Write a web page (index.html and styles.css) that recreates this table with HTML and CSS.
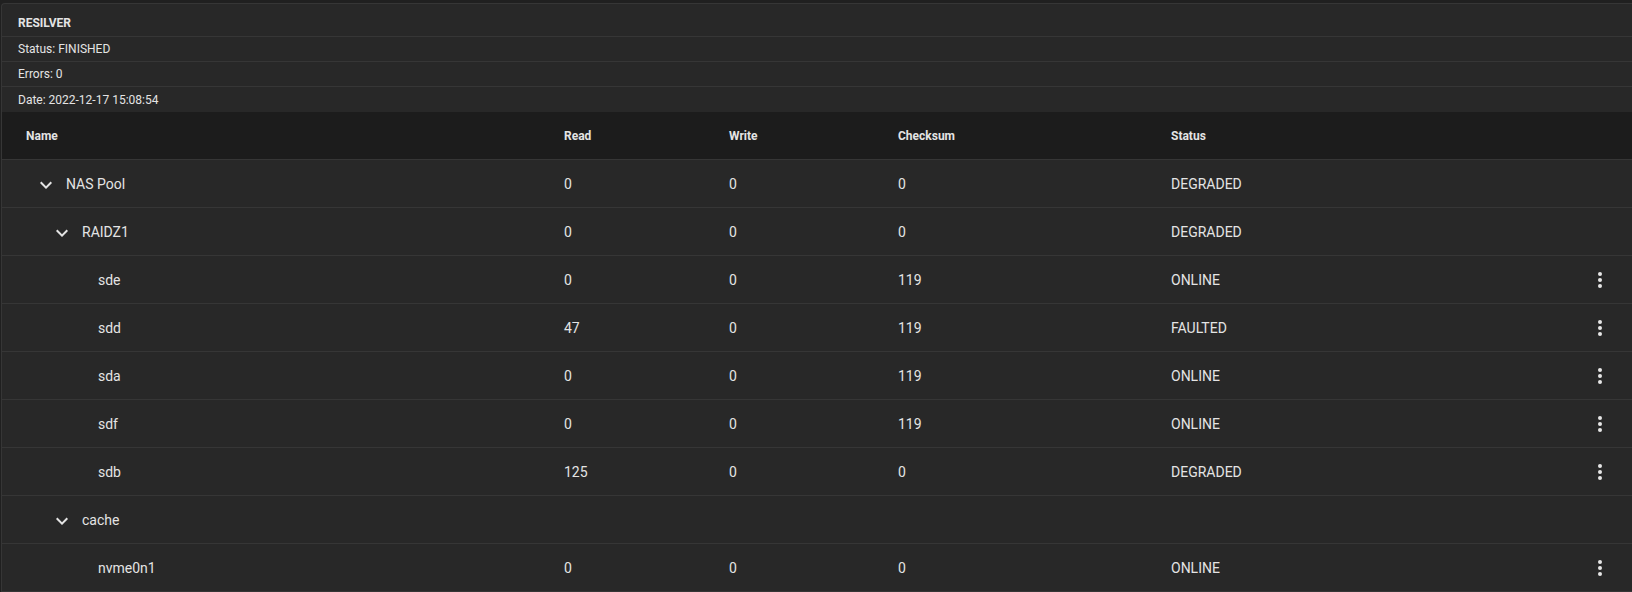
FILE: index.html
```html
<!DOCTYPE html>
<html>
<head>
<meta charset="utf-8">
<link rel="stylesheet" href="styles.css">
</head>
<body>
<div class="card">
  <div class="info">
    <div class="info-row info-title">RESILVER</div>
    <div class="info-row">Status: FINISHED</div>
    <div class="info-row">Errors: 0</div>
    <div class="info-row info-last">Date: 2022-12-17 15:08:54</div>
  </div>
  <div class="table">
    <div class="tr thead">
      <div class="td name">Name</div>
      <div class="td">Read</div>
      <div class="td">Write</div>
      <div class="td">Checksum</div>
      <div class="td">Status</div>
      <div class="td actions"></div>
    </div>

    <div class="tr">
      <div class="td name lvl0"><svg class="chev" viewBox="0 0 24 24"><path d="M16.59 8.59L12 13.17 7.41 8.59 6 10l6 6 6-6z"/></svg><span>NAS Pool</span></div>
      <div class="td">0</div><div class="td">0</div><div class="td">0</div><div class="td">DEGRADED</div><div class="td actions"></div>
    </div>
    <div class="tr">
      <div class="td name lvl1"><svg class="chev" viewBox="0 0 24 24"><path d="M16.59 8.59L12 13.17 7.41 8.59 6 10l6 6 6-6z"/></svg><span>RAIDZ1</span></div>
      <div class="td">0</div><div class="td">0</div><div class="td">0</div><div class="td">DEGRADED</div><div class="td actions"></div>
    </div>
    <div class="tr">
      <div class="td name lvl2"><span class="spacer"></span><span>sde</span></div>
      <div class="td">0</div><div class="td">0</div><div class="td">119</div><div class="td">ONLINE</div>
      <div class="td actions"><svg class="more" viewBox="0 0 24 24"><circle cx="12" cy="6" r="2"/><circle cx="12" cy="12" r="2"/><circle cx="12" cy="18" r="2"/></svg></div>
    </div>
    <div class="tr">
      <div class="td name lvl2"><span class="spacer"></span><span>sdd</span></div>
      <div class="td">47</div><div class="td">0</div><div class="td">119</div><div class="td">FAULTED</div>
      <div class="td actions"><svg class="more" viewBox="0 0 24 24"><circle cx="12" cy="6" r="2"/><circle cx="12" cy="12" r="2"/><circle cx="12" cy="18" r="2"/></svg></div>
    </div>
    <div class="tr">
      <div class="td name lvl2"><span class="spacer"></span><span>sda</span></div>
      <div class="td">0</div><div class="td">0</div><div class="td">119</div><div class="td">ONLINE</div>
      <div class="td actions"><svg class="more" viewBox="0 0 24 24"><circle cx="12" cy="6" r="2"/><circle cx="12" cy="12" r="2"/><circle cx="12" cy="18" r="2"/></svg></div>
    </div>
    <div class="tr">
      <div class="td name lvl2"><span class="spacer"></span><span>sdf</span></div>
      <div class="td">0</div><div class="td">0</div><div class="td">119</div><div class="td">ONLINE</div>
      <div class="td actions"><svg class="more" viewBox="0 0 24 24"><circle cx="12" cy="6" r="2"/><circle cx="12" cy="12" r="2"/><circle cx="12" cy="18" r="2"/></svg></div>
    </div>
    <div class="tr">
      <div class="td name lvl2"><span class="spacer"></span><span>sdb</span></div>
      <div class="td">125</div><div class="td">0</div><div class="td">0</div><div class="td">DEGRADED</div>
      <div class="td actions"><svg class="more" viewBox="0 0 24 24"><circle cx="12" cy="6" r="2"/><circle cx="12" cy="12" r="2"/><circle cx="12" cy="18" r="2"/></svg></div>
    </div>
    <div class="tr">
      <div class="td name lvl1"><svg class="chev" viewBox="0 0 24 24"><path d="M16.59 8.59L12 13.17 7.41 8.59 6 10l6 6 6-6z"/></svg><span>cache</span></div>
      <div class="td"></div><div class="td"></div><div class="td"></div><div class="td"></div><div class="td actions"></div>
    </div>
    <div class="tr">
      <div class="td name lvl2"><span class="spacer"></span><span>nvme0n1</span></div>
      <div class="td">0</div><div class="td">0</div><div class="td">0</div><div class="td">ONLINE</div>
      <div class="td actions"><svg class="more" viewBox="0 0 24 24"><circle cx="12" cy="6" r="2"/><circle cx="12" cy="12" r="2"/><circle cx="12" cy="18" r="2"/></svg></div>
    </div>
  </div>
</div>
</body>
</html>
```

FILE: styles.css
```css
html, body {
  margin: 0;
  padding: 0;
  background: #202020;
  overflow: hidden;
}
body {
  padding: 3px 0 0 1px;
  font-family: Roboto, "Liberation Sans", sans-serif;
  color: #e4e4e4;
}
.card {
  background: #282828;
  border-top: 1px solid #363636;
  border-left: 1px solid #363636;
  border-top-left-radius: 4px;
  width: 1640px;
}
.info-row {
  height: 24px;
  padding-left: 16px;
  display: flex;
  align-items: center;
  font-size: 12px;
  border-bottom: 1px solid #363636;
}
.info-title {
  height: 26px;
  padding-top: 6px;
  font-weight: 700;
}
.info-last {
  height: 25px;
  border-bottom: none;
}
.tr {
  display: grid;
  grid-template-columns: 538px 165px 169px 273px 429px 56px;
  height: 47px;
  border-bottom: 1px solid #363636;
  font-size: 14px;
}
.thead {
  background: #1c1c1c;
  font-size: 12px;
  font-weight: 700;
}
.td {
  display: flex;
  align-items: center;
  padding-left: 24px;
}
.lvl0 { padding-left: 32px; }
.lvl1 { padding-left: 48px; }
.lvl2 { padding-left: 64px; }
.chev {
  width: 24px;
  height: 24px;
  fill: #e4e4e4;
  margin-right: 8px;
  margin-top: 3px;
}
.spacer {
  display: inline-block;
  width: 32px;
}
.actions {
  padding-left: 0;
  justify-content: flex-end;
  padding-right: 20px;
}
.more {
  width: 24px;
  height: 24px;
  fill: #e6e6e6;
}
```
